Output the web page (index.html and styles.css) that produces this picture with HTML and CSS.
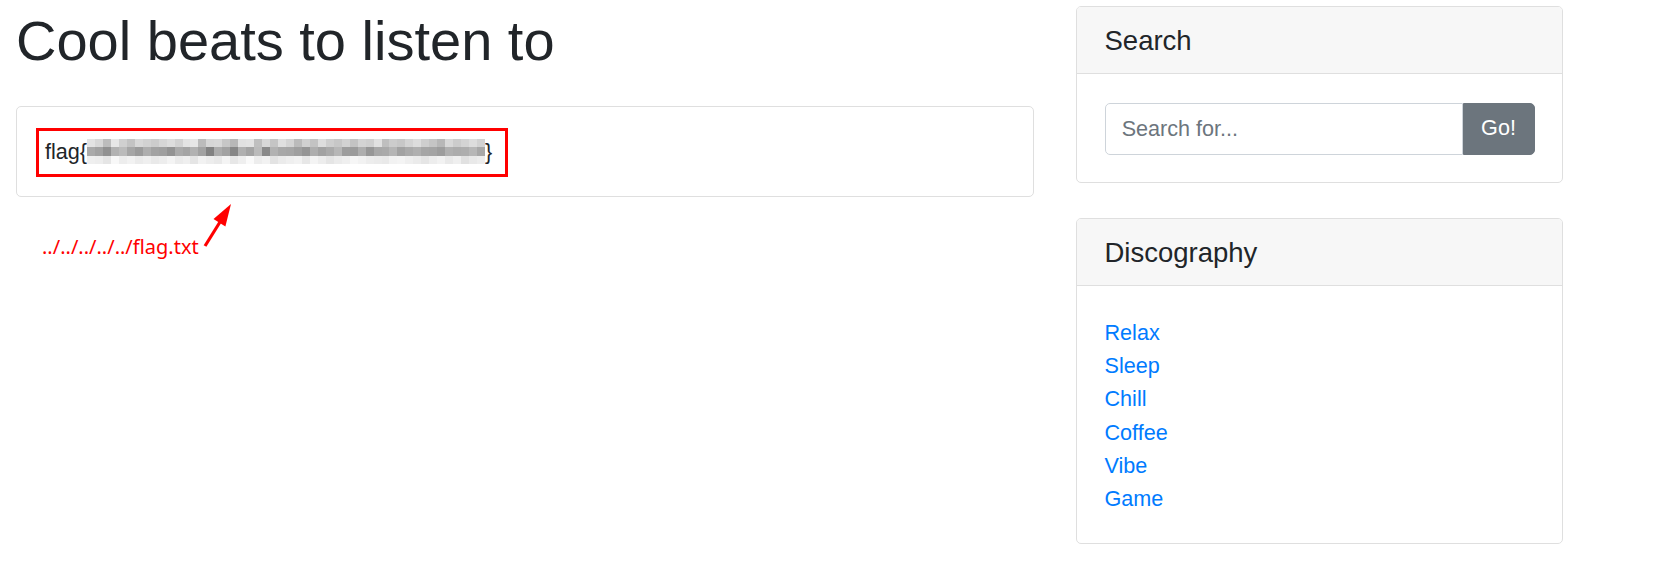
FILE: index.html
```html
<!DOCTYPE html>
<html lang="en">
<head>
<meta charset="utf-8">
<title>Cool beats</title>
<link rel="stylesheet" href="styles.css">
</head>
<body>
<div class="page">
  <main class="main">
    <h1 class="title">Cool beats to listen to</h1>
    <div class="card">
      <div class="flag-body">
        <span class="flag-box">flag{<svg class="mosaic" viewBox="0 0 50 3" preserveAspectRatio="none" shape-rendering="crispEdges">
<g>
<rect x="0" width="1" height="1" fill="#e6e6e6"/><rect x="1" width="1" height="1" fill="#dcdcdc"/><rect x="2" width="1" height="1" fill="#c2c2c2"/><rect x="3" width="1" height="1" fill="#eaeaea"/><rect x="4" width="1" height="1" fill="#d4d4d4"/><rect x="5" width="1" height="1" fill="#c8c8c8"/><rect x="6" width="1" height="1" fill="#dcdcdc"/><rect x="7" width="1" height="1" fill="#d6d6d6"/><rect x="8" width="1" height="1" fill="#d0d0d0"/><rect x="9" width="1" height="1" fill="#dadada"/>
<rect x="10" width="1" height="1" fill="#e0e0e0"/><rect x="11" width="1" height="1" fill="#d6d6d6"/><rect x="12" width="1" height="1" fill="#e6e6e6"/><rect x="13" width="1" height="1" fill="#eaeaea"/><rect x="14" width="1" height="1" fill="#c0c0c0"/><rect x="15" width="1" height="1" fill="#dadada"/><rect x="16" width="1" height="1" fill="#dcdcdc"/><rect x="17" width="1" height="1" fill="#cccccc"/><rect x="18" width="1" height="1" fill="#bcbcbc"/><rect x="19" width="1" height="1" fill="#e4e4e4"/>
<rect x="20" width="1" height="1" fill="#e6e6e6"/><rect x="21" width="1" height="1" fill="#c4c4c4"/><rect x="22" width="1" height="1" fill="#dcdcdc"/><rect x="23" width="1" height="1" fill="#cacaca"/><rect x="24" width="1" height="1" fill="#e2e2e2"/><rect x="25" width="1" height="1" fill="#d8d8d8"/><rect x="26" width="1" height="1" fill="#c0c0c0"/><rect x="27" width="1" height="1" fill="#d4d4d4"/><rect x="28" width="1" height="1" fill="#c8c8c8"/><rect x="29" width="1" height="1" fill="#e0e0e0"/>
<rect x="30" width="1" height="1" fill="#d2d2d2"/><rect x="31" width="1" height="1" fill="#cccccc"/><rect x="32" width="1" height="1" fill="#d6d6d6"/><rect x="33" width="1" height="1" fill="#c8c8c8"/><rect x="34" width="1" height="1" fill="#d8d8d8"/><rect x="35" width="1" height="1" fill="#d4d4d4"/><rect x="36" width="1" height="1" fill="#e4e4e4"/><rect x="37" width="1" height="1" fill="#c4c4c4"/><rect x="38" width="1" height="1" fill="#d0d0d0"/><rect x="39" width="1" height="1" fill="#cccccc"/>
<rect x="40" width="1" height="1" fill="#d8d8d8"/><rect x="41" width="1" height="1" fill="#e0e0e0"/><rect x="42" width="1" height="1" fill="#d2d2d2"/><rect x="43" width="1" height="1" fill="#cacaca"/><rect x="44" width="1" height="1" fill="#bcbcbc"/><rect x="45" width="1" height="1" fill="#dcdcdc"/><rect x="46" width="1" height="1" fill="#d0d0d0"/><rect x="47" width="1" height="1" fill="#d8d8d8"/><rect x="48" width="1" height="1" fill="#e0e0e0"/><rect x="49" width="1" height="1" fill="#d6d6d6"/>
</g>
<g transform="translate(0,1)">
<rect x="0" width="1" height="1" fill="#b0b0b0"/><rect x="1" width="1" height="1" fill="#a8a8a8"/><rect x="2" width="1" height="1" fill="#989898"/><rect x="3" width="1" height="1" fill="#b8b8b8"/><rect x="4" width="1" height="1" fill="#c0c0c0"/><rect x="5" width="1" height="1" fill="#acacac"/><rect x="6" width="1" height="1" fill="#a2a2a2"/><rect x="7" width="1" height="1" fill="#b4b4b4"/><rect x="8" width="1" height="1" fill="#a8a8a8"/><rect x="9" width="1" height="1" fill="#a6a6a6"/>
<rect x="10" width="1" height="1" fill="#9a9a9a"/><rect x="11" width="1" height="1" fill="#b0b0b0"/><rect x="12" width="1" height="1" fill="#aaaaaa"/><rect x="13" width="1" height="1" fill="#b8b8b8"/><rect x="14" width="1" height="1" fill="#a8a8a8"/><rect x="15" width="1" height="1" fill="#8a8a8a"/><rect x="16" width="1" height="1" fill="#b2b2b2"/><rect x="17" width="1" height="1" fill="#a8a8a8"/><rect x="18" width="1" height="1" fill="#8e8e8e"/><rect x="19" width="1" height="1" fill="#b6b6b6"/>
<rect x="20" width="1" height="1" fill="#aaaaaa"/><rect x="21" width="1" height="1" fill="#c0c0c0"/><rect x="22" width="1" height="1" fill="#929292"/><rect x="23" width="1" height="1" fill="#b8b8b8"/><rect x="24" width="1" height="1" fill="#aeaeae"/><rect x="25" width="1" height="1" fill="#acacac"/><rect x="26" width="1" height="1" fill="#a6a6a6"/><rect x="27" width="1" height="1" fill="#9c9c9c"/><rect x="28" width="1" height="1" fill="#b4b4b4"/><rect x="29" width="1" height="1" fill="#a8a8a8"/>
<rect x="30" width="1" height="1" fill="#b0b0b0"/><rect x="31" width="1" height="1" fill="#bcbcbc"/><rect x="32" width="1" height="1" fill="#a4a4a4"/><rect x="33" width="1" height="1" fill="#a2a2a2"/><rect x="34" width="1" height="1" fill="#b4b4b4"/><rect x="35" width="1" height="1" fill="#9e9e9e"/><rect x="36" width="1" height="1" fill="#aeaeae"/><rect x="37" width="1" height="1" fill="#b0b0b0"/><rect x="38" width="1" height="1" fill="#bababa"/><rect x="39" width="1" height="1" fill="#a8a8a8"/>
<rect x="40" width="1" height="1" fill="#b0b0b0"/><rect x="41" width="1" height="1" fill="#b6b6b6"/><rect x="42" width="1" height="1" fill="#acacac"/><rect x="43" width="1" height="1" fill="#aaaaaa"/><rect x="44" width="1" height="1" fill="#a4a4a4"/><rect x="45" width="1" height="1" fill="#b6b6b6"/><rect x="46" width="1" height="1" fill="#b2b2b2"/><rect x="47" width="1" height="1" fill="#b4b4b4"/><rect x="48" width="1" height="1" fill="#bcbcbc"/><rect x="49" width="1" height="1" fill="#aeaeae"/>
</g>
<g transform="translate(0,2)">
<rect x="0" width="1" height="1" fill="#f2f2f2"/><rect x="1" width="1" height="1" fill="#f0f0f0"/><rect x="2" width="1" height="1" fill="#e8e8e8"/><rect x="3" width="1" height="1" fill="#fafafa"/><rect x="4" width="1" height="1" fill="#f0f0f0"/><rect x="5" width="1" height="1" fill="#f4f4f4"/><rect x="6" width="1" height="1" fill="#eeeeee"/><rect x="7" width="1" height="1" fill="#f2f2f2"/><rect x="8" width="1" height="1" fill="#ececec"/><rect x="9" width="1" height="1" fill="#f0f0f0"/>
<rect x="10" width="1" height="1" fill="#f6f6f6"/><rect x="11" width="1" height="1" fill="#eeeeee"/><rect x="12" width="1" height="1" fill="#f2f2f2"/><rect x="13" width="1" height="1" fill="#e8e8e8"/><rect x="14" width="1" height="1" fill="#f4f4f4"/><rect x="15" width="1" height="1" fill="#f0f0f0"/><rect x="16" width="1" height="1" fill="#ececec"/><rect x="17" width="1" height="1" fill="#f6f6f6"/><rect x="18" width="1" height="1" fill="#eaeaea"/><rect x="19" width="1" height="1" fill="#f2f2f2"/>
<rect x="20" width="1" height="1" fill="#fcfcfc"/><rect x="21" width="1" height="1" fill="#f0f0f0"/><rect x="22" width="1" height="1" fill="#f4f4f4"/><rect x="23" width="1" height="1" fill="#e6e6e6"/><rect x="24" width="1" height="1" fill="#eeeeee"/><rect x="25" width="1" height="1" fill="#f2f2f2"/><rect x="26" width="1" height="1" fill="#f4f4f4"/><rect x="27" width="1" height="1" fill="#eaeaea"/><rect x="28" width="1" height="1" fill="#f6f6f6"/><rect x="29" width="1" height="1" fill="#f0f0f0"/>
<rect x="30" width="1" height="1" fill="#e8e8e8"/><rect x="31" width="1" height="1" fill="#eeeeee"/><rect x="32" width="1" height="1" fill="#f2f2f2"/><rect x="33" width="1" height="1" fill="#f8f8f8"/><rect x="34" width="1" height="1" fill="#f4f4f4"/><rect x="35" width="1" height="1" fill="#f0f0f0"/><rect x="36" width="1" height="1" fill="#eeeeee"/><rect x="37" width="1" height="1" fill="#ececec"/><rect x="38" width="1" height="1" fill="#f4f4f4"/><rect x="39" width="1" height="1" fill="#f6f6f6"/>
<rect x="40" width="1" height="1" fill="#f2f2f2"/><rect x="41" width="1" height="1" fill="#eeeeee"/><rect x="42" width="1" height="1" fill="#e8e8e8"/><rect x="43" width="1" height="1" fill="#f0f0f0"/><rect x="44" width="1" height="1" fill="#f4f4f4"/><rect x="45" width="1" height="1" fill="#ececec"/><rect x="46" width="1" height="1" fill="#f2f2f2"/><rect x="47" width="1" height="1" fill="#e4e4e4"/><rect x="48" width="1" height="1" fill="#ececec"/><rect x="49" width="1" height="1" fill="#f0f0f0"/>
</g>
</svg>}</span>
      </div>
    </div>
    <div class="note">
      <span class="note-text">../../../../../flag.txt</span>
      <svg class="arrow" viewBox="0 0 34 48">
        <line x1="4" y1="45" x2="19" y2="21" stroke="#ff0000" stroke-width="3.2"/>
        <polygon points="30,3 12.5,18 24.4,25.4" fill="#ff0000"/>
      </svg>
    </div>
  </main>
  <aside class="sidebar">
    <div class="card">
      <h5 class="card-header">Search</h5>
      <div class="card-body search-body">
        <div class="input-group">
          <input class="form-control" type="text" placeholder="Search for...">
          <button class="btn" type="button">Go!</button>
        </div>
      </div>
    </div>
    <div class="card">
      <h5 class="card-header">Discography</h5>
      <div class="card-body disco-body">
        <ul class="links">
          <li><a href="#">Relax</a></li>
          <li><a href="#">Sleep</a></li>
          <li><a href="#">Chill</a></li>
          <li><a href="#">Coffee</a></li>
          <li><a href="#">Vibe</a></li>
          <li><a href="#">Game</a></li>
        </ul>
      </div>
    </div>
  </aside>
</div>
</body>
</html>
```

FILE: styles.css
```css
* { box-sizing: border-box; }

body {
  margin: 0;
  font-family: "Liberation Sans", Arial, sans-serif;
  font-size: 21.6px;
  line-height: 1.5;
  color: #212529;
  background: #fff;
}

.page {
  display: flex;
  align-items: flex-start;
  gap: 42px;
  padding-left: 16px;
}

.main {
  flex: none;
  width: 1018px;
}

.title {
  margin: 7px 0 32px;
  font-size: 56px;
  font-weight: 400;
  line-height: 1.2;
  color: #212529;
}

.card {
  border: 1px solid #dfdfdf;
  border-radius: 5px;
  background: #fff;
  overflow: hidden;
}

.flag-body {
  padding: 21px 27px 19px;
}

.flag-box {
  display: inline-block;
  margin-left: -8px;
  padding: 5px 13px 5px 6px;
  border: 3px solid #ff0000;
  line-height: 32.4px;
  white-space: nowrap;
}

.mosaic {
  display: inline-block;
  width: 398px;
  height: 25px;
  vertical-align: -4.4px;
  filter: brightness(0.94) contrast(1.12);
}

.note {
  display: flex;
  align-items: flex-start;
  margin-top: 4px;
  padding-left: 26px;
}

.note-text {
  flex: none;
  width: 159px;
  margin-top: 33px;
  font-family: "Noto Sans", sans-serif;
  font-size: 20px;
  line-height: 26px;
  color: #ff0000;
  white-space: nowrap;
}

.arrow {
  flex: none;
  width: 34px;
  height: 48px;
}

.sidebar {
  flex: none;
  width: 487px;
  padding-top: 6px;
  display: flex;
  flex-direction: column;
  gap: 35px;
}

.card-header {
  margin: 0;
  padding: 16.5px 27.5px;
  font-size: 27.5px;
  font-weight: 400;
  line-height: 1.2;
  background: #f7f7f7;
  border-bottom: 1px solid #dfdfdf;
  color: #212529;
}

.card-body {
  padding: 27.5px;
}

.search-body {
  padding-top: 28.5px;
}

.input-group {
  display: flex;
}

.form-control {
  flex: 1;
  min-width: 0;
  height: 52px;
  padding: 0 16.2px;
  border: 1px solid #ced4da;
  border-radius: 5px 0 0 5px;
  font: inherit;
  color: #495057;
  background: #fff;
}

.form-control::placeholder {
  color: #6c757d;
  opacity: 1;
}

.btn {
  flex: none;
  width: 72px;
  height: 52px;
  padding: 0;
  border: 1px solid #6c757d;
  border-radius: 0 5px 5px 0;
  background: #6c757d;
  color: #fff;
  font: inherit;
}

.disco-body {
  padding-top: 30px;
}

.links {
  margin: 0;
  padding: 0;
  list-style: none;
  line-height: 33.2px;
}

.links a {
  color: #007bff;
  text-decoration: none;
}
```
